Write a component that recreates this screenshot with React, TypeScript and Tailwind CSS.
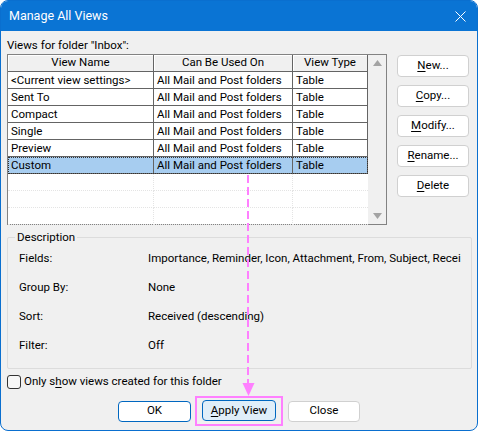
const font = { fontFamily: 'Roboto, "Noto Sans", sans-serif' };

const rows = [
  "<Current view settings>",
  "Sent To",
  "Compact",
  "Single",
  "Preview",
  "Custom",
];

function Key({ label, k }: { label: string; k: number }) {
  return (
    <>
      {label.slice(0, k)}
      <span className="underline underline-offset-2">{label[k]}</span>
      {label.slice(k + 1)}
    </>
  );
}

function SideButton({ label, k }: { label: string; k: number }) {
  return (
    <button className="h-[22px] w-[72px] rounded-[4px] border border-[#d0d0d0] bg-white leading-none text-black">
      <Key label={label} k={k} />
    </button>
  );
}

function TableRow({ name, selected }: { name: string; selected: boolean }) {
  const cell = "h-[17px] border-b border-r border-[#646464] px-[3px] leading-[16px] whitespace-nowrap overflow-hidden";
  return (
    <div
      className={`grid grid-cols-[146px_139px_75px] ${selected ? "bg-[#a7cdf0] outline outline-1 outline-dotted outline-[#333] -outline-offset-1" : "bg-white"}`}
    >
      <div className={cell}>{name}</div>
      <div className={cell}>All Mail and Post folders</div>
      <div className={cell}>Table</div>
    </div>
  );
}

function DescRow({ label, value }: { label: string; value: string }) {
  return (
    <div className="flex h-[29px] items-center">
      <div className="w-[129px] shrink-0">{label}</div>
      <div className="whitespace-nowrap">{value}</div>
    </div>
  );
}

export default function App() {
  return (
    <div className="relative h-[431px] w-[478px] overflow-hidden rounded-[8px] border border-[#0a6fcf] bg-[#f0f0f0] text-[11.5px] text-black" style={font}>
      {/* title bar */}
      <div className="flex h-[30px] items-center justify-between bg-[#0a74d4] pl-[8px] pr-[11px] text-white">
        <span className="text-[12.5px]">Manage All Views</span>
        <svg width="11" height="11" viewBox="0 0 11 11" stroke="white" strokeWidth="1">
          <path d="M0.5 0.5 L10.5 10.5 M10.5 0.5 L0.5 10.5" />
        </svg>
      </div>

      <div className="px-[6px]">
        <div className="flex">
          <div className="w-[380px]">
            <div className="h-[23px] pt-[6px] leading-[16px]">Views for folder "Inbox":</div>
            {/* list view */}
            <div className="flex h-[171px] border border-[#828282] bg-white">
              <div className="relative w-[360px]">
                <div className="grid grid-cols-[146px_139px_75px] bg-[#f0f0f0]">
                  {["View Name", "Can Be Used On", "View Type"].map((h) => (
                    <div key={h} className="h-[17px] border-b border-r border-[#646464] text-center leading-[15px] shadow-[inset_1px_1px_0_#ffffff]">
                      {h}
                    </div>
                  ))}
                </div>
                {rows.map((r, i) => (
                  <TableRow key={r} name={r} selected={i === rows.length - 1} />
                ))}
                {/* faint grid in empty area */}
                <div className="grid grid-cols-[146px_139px_75px]">
                  {[0, 1, 2].map((i) => (
                    <div key={i} className="contents">
                      <div className="h-[17px] border-b border-r border-dotted border-[#e4e4e4]" />
                      <div className="h-[17px] border-b border-r border-dotted border-[#e4e4e4]" />
                      <div className="h-[17px] border-b border-dotted border-[#e4e4e4]" />
                    </div>
                  ))}
                </div>
              </div>
              <div className="flex w-[18px] flex-col items-center justify-between bg-[#f0f0f0] py-[5px]">
                <svg width="9" height="6" viewBox="0 0 9 6"><path d="M4.5 0 L9 6 L0 6 Z" fill="#a3a3a3" /></svg>
                <svg width="9" height="6" viewBox="0 0 9 6"><path d="M0 0 L9 0 L4.5 6 Z" fill="#a3a3a3" /></svg>
              </div>
            </div>
          </div>
          <div className="ml-[10px] flex flex-col gap-[8px] pt-[24px]">
            <SideButton label="New..." k={0} />
            <SideButton label="Copy..." k={0} />
            <SideButton label="Modify..." k={0} />
            <SideButton label="Rename..." k={0} />
            <SideButton label="Delete" k={0} />
          </div>
        </div>

        {/* description group */}
        <div className="relative mt-[12px] h-[132px] w-[465px] rounded-[2px] border border-[#dcdcdc] pl-[11px] pt-[6px]">
          <span className="absolute left-[7px] top-[-9px] bg-[#f0f0f0] px-[2px] leading-[16px]">Description</span>
          <div>
            <DescRow label="Fields:" value="Importance, Reminder, Icon, Attachment, From, Subject, Recei" />
            <DescRow label="Group By:" value="None" />
            <DescRow label="Sort:" value="Received (descending)" />
            <DescRow label="Filter:" value="Off" />
          </div>
        </div>

        <label className="mt-[6px] flex h-[14px] items-center gap-[3px]">
          <span className="h-[14px] w-[14px] rounded-[3px] border border-[#333] bg-[#f7f7f7]" />
          <span>
            Only s<span className="underline underline-offset-2">h</span>ow views created for this folder
          </span>
        </label>

        <div className="mt-[7px] flex items-center pl-[111px]">
          <button className="h-[21px] w-[73px] rounded-[4px] border border-[#0067c0] bg-white">OK</button>
          <div className="ml-[4px] border-2 border-[#ff80ff] px-[5px] pb-[3px] pt-[2px]">
            <button className="h-[21px] w-[74px] rounded-[4px] border border-[#0067c0] bg-[#e0eef9]">
              <Key label="Apply View" k={0} />
            </button>
          </div>
          <button className="ml-[5px] h-[21px] w-[72px] rounded-[4px] border border-[#d0d0d0] bg-white">Close</button>
        </div>
      </div>

      {/* pink callout arrow */}
      <svg className="pointer-events-none absolute left-0 top-0" width="478" height="431">
        <line x1="247" y1="174" x2="247" y2="384" stroke="#ff80ff" strokeWidth="2" strokeDasharray="8 4" />
        <path d="M241.5 382 L253.5 382 L247.5 395 Z" fill="#ff80ff" />
      </svg>
    </div>
  );
}
